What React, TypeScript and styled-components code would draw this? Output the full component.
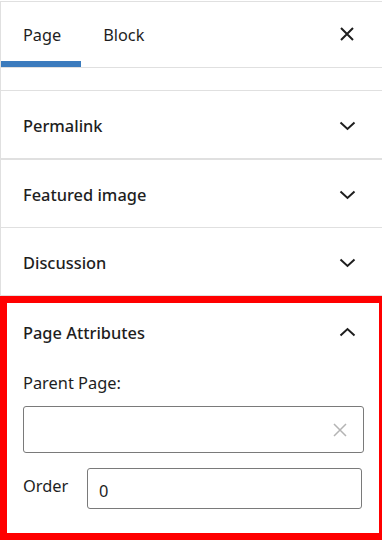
import React from "react";
import styled, { createGlobalStyle } from "styled-components";

const Global = createGlobalStyle`
  html, body { margin: 0; padding: 0; background: #fff; }
  body {
    padding-top: 1px;
    font-family: "Noto Sans", "Open Sans", Arial, sans-serif;
    color: #1e1e1e;
    -webkit-font-smoothing: antialiased;
  }
  * { box-sizing: border-box; }
`;

const Sidebar = styled.div`
  width: 382px;
  border-left: 1px solid #e0e0e0;
  border-top: 1px solid #e0e0e0;
  background: #fff;
`;

const Header = styled.div`
  display: flex;
  align-items: stretch;
  height: 66px;
  border-bottom: 1px solid #e0e0e0;
`;

const Tab = styled.div<{ $active?: boolean }>`
  display: flex;
  align-items: center;
  padding: 0 20px 0 22px;
  font-size: 16.3px;
  color: #1e1e1e;
  box-shadow: inset 0 -6px 0 ${(p) => (p.$active ? "#3b7bbd" : "transparent")};
`;

const CloseButton = styled.div`
  margin-left: auto;
  width: 70px;
  display: flex;
  align-items: center;
  justify-content: center;
  padding-bottom: 2px;
`;

const Spacer = styled.div`
  height: 23px;
  border-bottom: 1px solid #e0e0e0;
`;

const PanelRow = styled.div<{ $thick?: boolean }>`
  height: ${(p) => (p.$thick ? 69 : 68)}px;
  display: flex;
  align-items: center;
  justify-content: space-between;
  padding: 2px 26px 0 22px;
  border-bottom: ${(p) => (p.$thick ? 2 : 1)}px solid #e0e0e0;
`;

const PanelTitle = styled.span`
  font-size: 16.4px;
  font-weight: 500;
`;

const OpenPanel = styled.div`
  margin-left: -1px;
  width: 382px;
  border-style: solid;
  border-color: #ff0000;
  border-width: 7px 3px 7px 7px;
  padding: 0 15px 24px 16px;
`;

const OpenHeader = styled.div`
  height: 58px;
  display: flex;
  align-items: center;
  justify-content: space-between;
  padding: 0 8px 0 0;
`;

const FieldLabel = styled.div`
  font-size: 16.4px;
  line-height: 24px;
  margin: 10px 0 11px;
`;

const ComboBox = styled.div`
  height: 47px;
  border: 1px solid #7a7a7a;
  border-radius: 3px;
  display: flex;
  align-items: center;
  justify-content: flex-end;
  padding-right: 16px;
`;

const OrderRow = styled.div`
  display: flex;
  align-items: center;
  margin-top: 15px;
`;

const OrderLabel = styled.span`
  font-size: 16.4px;
  width: 64px;
  padding-bottom: 6px;
`;

const NumberInput = styled.div`
  flex: 1;
  height: 41px;
  margin-right: 2px;
  border: 1px solid #7a7a7a;
  border-radius: 3px;
  display: flex;
  align-items: center;
  padding: 3px 0 0 11px;
  font-size: 16.4px;
`;

const Chevron = ({ up }: { up?: boolean }) => (
  <svg width="17" height="10" viewBox="0 0 17 10">
    <path
      d={up ? "M1.5 8.5 L8.5 2 L15.5 8.5" : "M1.5 1.5 L8.5 8 L15.5 1.5"}
      fill="none"
      stroke="#1e1e1e"
      strokeWidth="2"
    />
  </svg>
);

const Cross = ({ size, color, w }: { size: number; color: string; w: number }) => (
  <svg width={size} height={size} viewBox={`0 0 ${size} ${size}`}>
    <path
      d={`M1 1 L${size - 1} ${size - 1} M${size - 1} 1 L1 ${size - 1}`}
      stroke={color}
      strokeWidth={w}
      fill="none"
    />
  </svg>
);

export default function App() {
  return (
    <>
      <Global />
      <Sidebar>
        <Header>
          <Tab $active>Page</Tab>
          <Tab>Block</Tab>
          <CloseButton>
            <Cross size={14} color="#1e1e1e" w={2} />
          </CloseButton>
        </Header>
        <Spacer />
        <PanelRow $thick>
          <PanelTitle>Permalink</PanelTitle>
          <Chevron />
        </PanelRow>
        <PanelRow>
          <PanelTitle>Featured image</PanelTitle>
          <Chevron />
        </PanelRow>
        <PanelRow>
          <PanelTitle>Discussion</PanelTitle>
          <Chevron />
        </PanelRow>
        <OpenPanel>
          <OpenHeader>
            <PanelTitle>Page Attributes</PanelTitle>
            <Chevron up />
          </OpenHeader>
          <FieldLabel>Parent Page:</FieldLabel>
          <ComboBox>
            <Cross size={14} color="#b4b4b4" w={1.5} />
          </ComboBox>
          <OrderRow>
            <OrderLabel>Order</OrderLabel>
            <NumberInput>0</NumberInput>
          </OrderRow>
        </OpenPanel>
      </Sidebar>
    </>
  );
}
